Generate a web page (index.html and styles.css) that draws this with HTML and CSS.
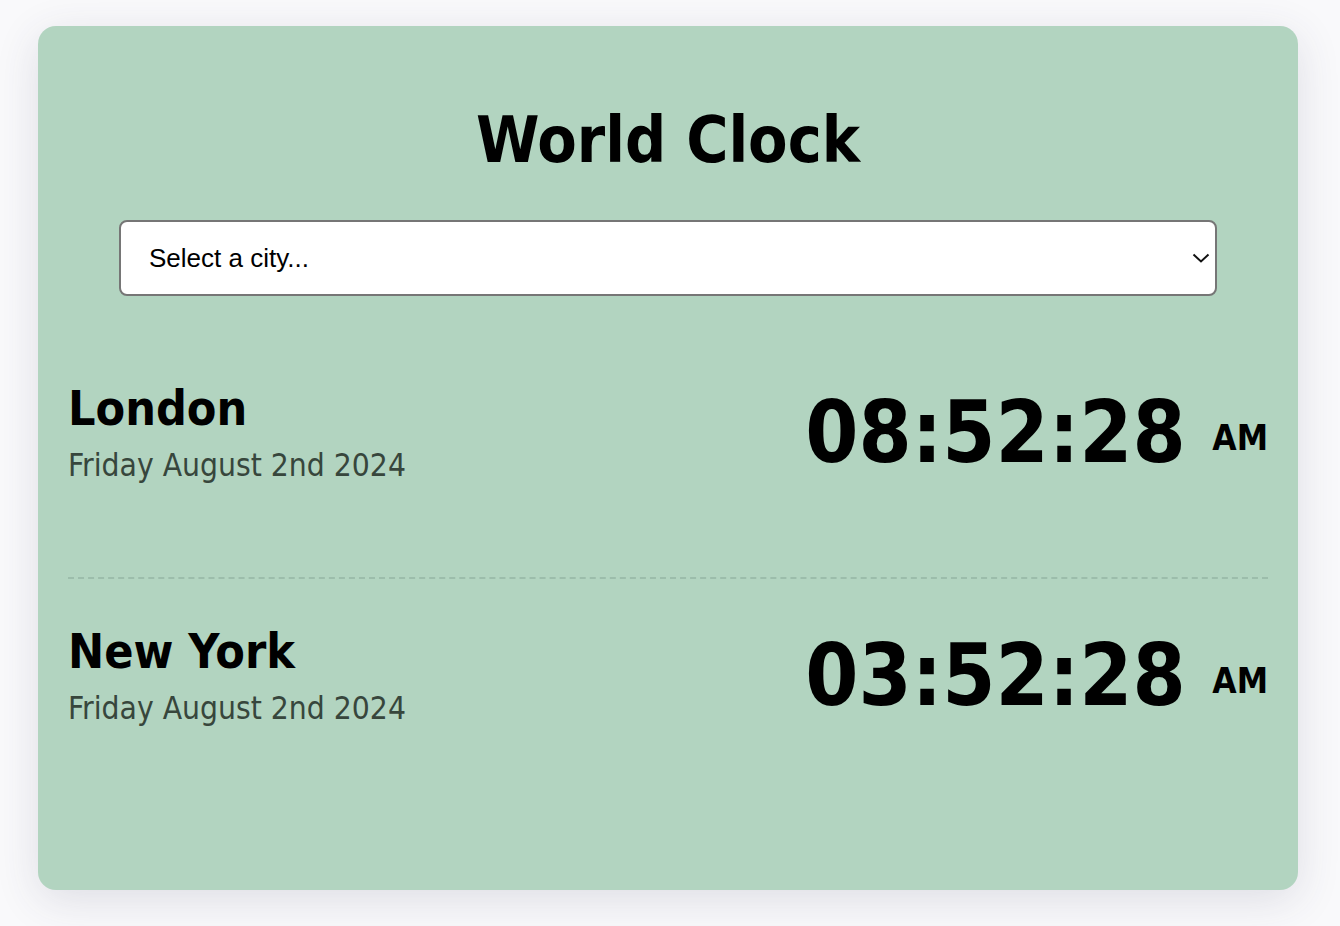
FILE: index.html
```html
<!DOCTYPE html>
<html lang="en">
<head>
<meta charset="utf-8">
<title>World Clock</title>
<link rel="stylesheet" href="styles.css">
</head>
<body>
<main class="card">
  <h1 class="title">World Clock</h1>
  <div class="select-wrap">
    <select class="city-select">
      <option>Select a city...</option>
    </select>
    <svg class="chevron" viewBox="0 0 18 10" width="18" height="10"><path d="M1.5 1.5 L9 8.5 L16.5 1.5" fill="none" stroke="#111" stroke-width="2"/></svg>
  </div>
  <section class="cities">
    <div class="city">
      <div class="city-info">
        <h2 class="city-name">London</h2>
        <div class="city-date">Friday August 2nd 2024</div>
      </div>
      <div class="city-time">08:52:28 <small class="ampm">AM</small></div>
    </div>
    <div class="city">
      <div class="city-info">
        <h2 class="city-name">New York</h2>
        <div class="city-date">Friday August 2nd 2024</div>
      </div>
      <div class="city-time">03:52:28 <small class="ampm">AM</small></div>
    </div>
  </section>
</main>
</body>
</html>
```
FILE: styles.css
```css
html, body {
  margin: 0;
  padding: 0;
}
html {
  background: #f9f9fb;
}
body {
  background: #f9f9fb;
  font-family: Tahoma, "DejaVu Sans Condensed", "DejaVu Sans", sans-serif;
  color: #000;
  padding: 26px 0 36px 38px;
}
.card {
  box-sizing: border-box;
  width: 1260px;
  height: 864px;
  background: #b2d4c0;
  border-radius: 18px;
  box-shadow: 0 10px 44px rgba(60, 60, 90, 0.14);
  padding: 82px 30px 30px;
}
.title {
  margin: 0;
  text-align: center;
  font-size: 64px;
  font-weight: bold;
  line-height: 1;
}
.select-wrap {
  position: relative;
  margin: 48px 51px 0 51px;
}
.city-select {
  display: block;
  width: 100%;
  height: 76px;
  box-sizing: border-box;
  -webkit-appearance: none;
  appearance: none;
  background: #fff;
  border: 2px solid #767676;
  border-radius: 8px;
  padding: 0 28px;
  font-family: "Liberation Sans", Arial, sans-serif;
  font-size: 26px;
  color: #000;
}
.chevron {
  position: absolute;
  right: 7px;
  top: 33px;
}
.cities {
  margin-top: 86px;
}
.city {
  display: flex;
  justify-content: space-between;
  align-items: flex-start;
  height: 195px;
}
.city + .city {
  border-top: 2px dashed #9cbdab;
  padding-top: 46px;
}
.city-name {
  margin: 0;
  font-size: 48px;
  font-weight: bold;
  line-height: 1.1;
}
.city-date {
  font-size: 31.5px;
  color: #37463c;
  margin-top: 12px;
}
.city-time {
  font-size: 85px;
  font-weight: bold;
  line-height: 1;
  white-space: nowrap;
  padding-top: 8px;
}
.ampm {
  font-size: 35px;
  vertical-align: 12px;
}
```
